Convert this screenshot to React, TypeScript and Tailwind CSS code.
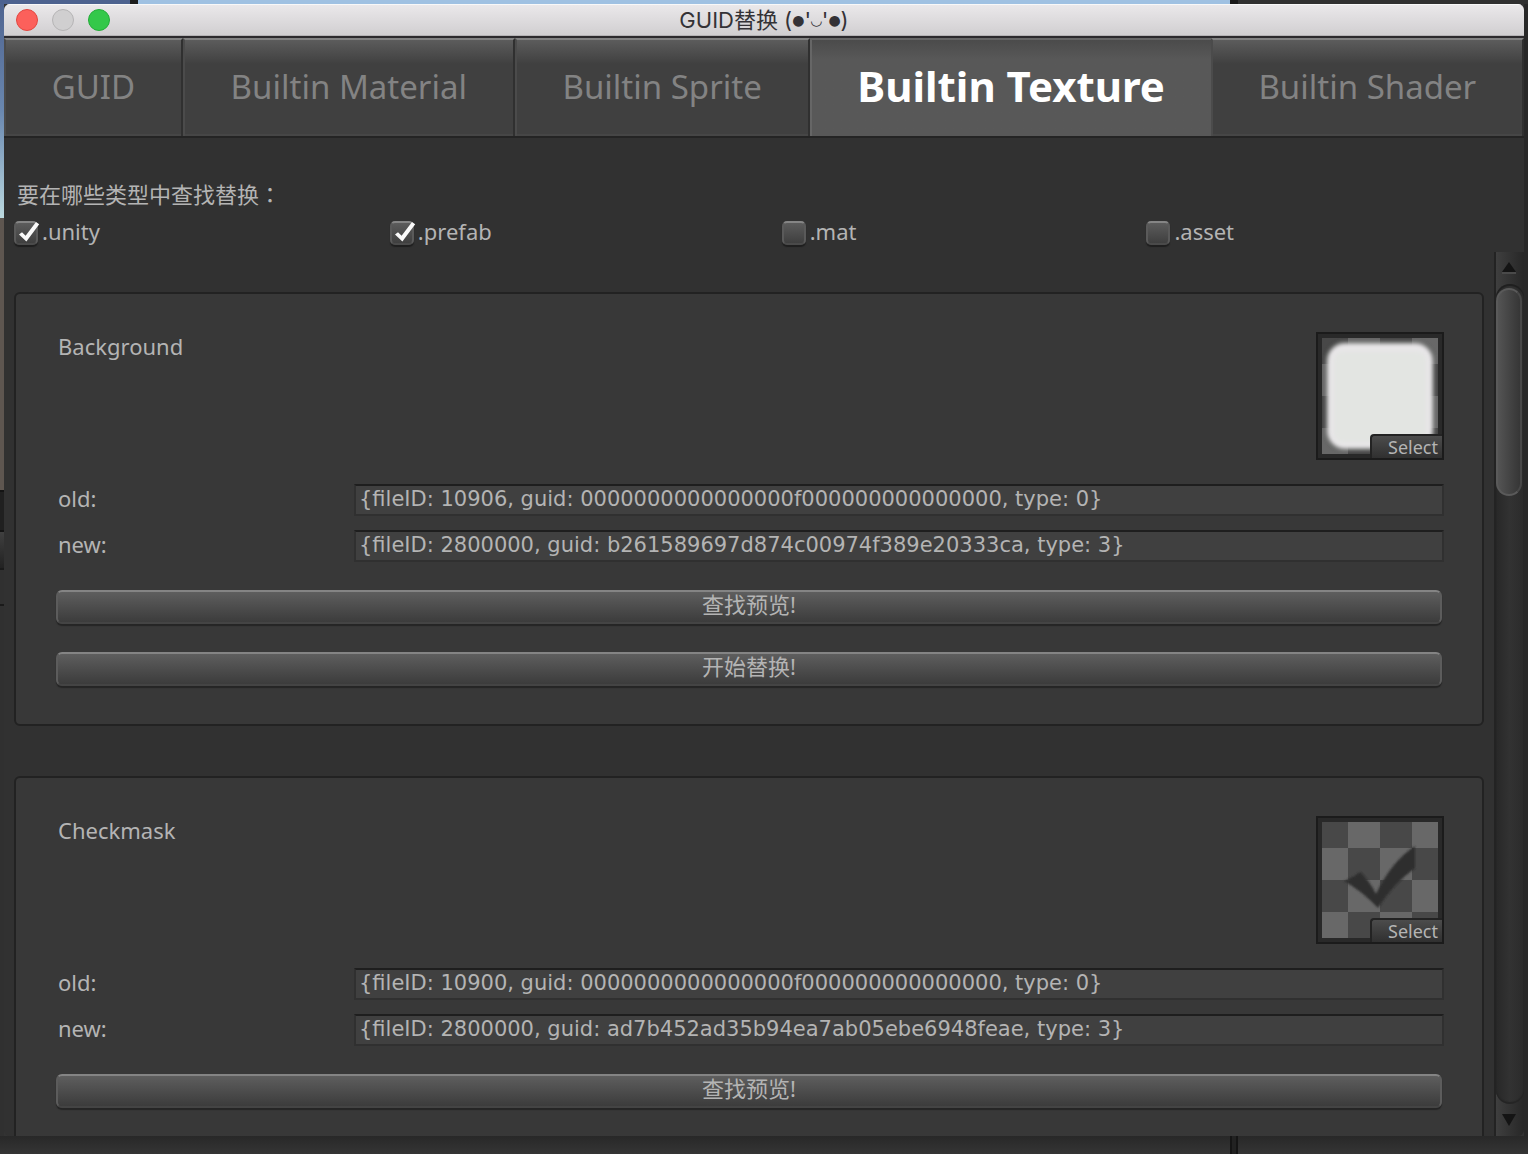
import { useId, useState } from "react";

const TABS = ["GUID", "Builtin Material", "Builtin Sprite", "Builtin Texture", "Builtin Shader"];

const TYPES = [
  { name: ".unity", on: true },
  { name: ".prefab", on: true },
  { name: ".mat", on: false },
  { name: ".asset", on: false },
];

type Entry = { name: string; oldRef: string; newRef: string; art: "panel" | "check" };

const ENTRIES: Entry[] = [
  {
    name: "Background",
    oldRef: "{fileID: 10906, guid: 0000000000000000f000000000000000, type: 0}",
    newRef: "{fileID: 2800000, guid: b261589697d874c00974f389e20333ca, type: 3}",
    art: "panel",
  },
  {
    name: "Checkmask",
    oldRef: "{fileID: 10900, guid: 0000000000000000f000000000000000, type: 0}",
    newRef: "{fileID: 2800000, guid: ad7b452ad35b94ea7ab05ebe6948feae, type: 3}",
    art: "check",
  },
];

function TitleBar() {
  return (
    <header className="grid h-[34px] shrink-0 grid-cols-[1fr_auto_1fr] items-center border-b-2 border-[#2c2a2d] bg-linear-to-b from-[#ebe9eb] to-[#d0ced0] px-3 shadow-[inset_0_1px_0_#f8f8f8,inset_0_-1px_0_#b5b3b5]">
      <div className="flex gap-[14px]">
        <button aria-label="Close" className="size-[22px] rounded-full border border-[#e2463f] bg-[#fc605b]" />
        <button aria-label="Minimize" className="size-[22px] rounded-full border border-[#b5b4b5] bg-[#d0cfd0]" />
        <button aria-label="Zoom" className="size-[22px] rounded-full border border-[#23ac38] bg-[#34c84a]" />
      </div>
      <h1 className="flex items-center font-[Inter,'Noto_Sans_CJK_SC',sans-serif] text-[22px] leading-8 whitespace-pre text-[#343236]">
        GUID替换 (<span className="font-['DejaVu_Sans',sans-serif] text-sm">●</span>'
        <span className="font-['DejaVu_Sans',sans-serif] text-sm font-bold">◡</span>'
        <span className="font-['DejaVu_Sans',sans-serif] text-sm">●</span>)
      </h1>
    </header>
  );
}

function Tabs() {
  const [active, setActive] = useState(3);
  return (
    <nav role="tablist" className="flex h-[100px] shrink-0 border-b-2 border-[#242424]">
      {TABS.map((tab, i) => (
        <button
          key={tab}
          role="tab"
          aria-selected={i === active}
          onClick={() => setActive(i)}
          className={
            i === active
              ? "flex-auto border-t-2 border-l-2 border-[#666] bg-linear-to-b from-[#4b4b4b] to-[#585858] to-20% px-11 pb-1 text-[42px] leading-none font-bold whitespace-nowrap text-white"
              : "flex-auto border-t-2 border-r-2 border-l-2 border-t-[#828282] border-r-[#303030] border-l-[#4b4b4b] bg-linear-to-b from-[#5c5c5c] to-[#404040] to-25% px-11 pb-1 text-[33px] leading-none whitespace-nowrap text-[#838383] shadow-[inset_0_-2px_0_#464646]"
          }
        >
          {tab}
        </button>
      ))}
    </nav>
  );
}

function TypeToggle({ name, initial }: { name: string; initial: boolean }) {
  const [on, setOn] = useState(initial);
  return (
    <label className="flex flex-auto items-center gap-1">
      <span className="relative mt-1 size-6 shrink-0">
        <input
          type="checkbox"
          checked={on}
          onChange={() => setOn(!on)}
          className="block size-6 appearance-none rounded-[5px] border-2 border-[#5a5a5a] border-t-[#858585] border-b-[#4a4a4a] bg-linear-to-b from-[#5c5c5c] to-[#3f3f3f] shadow-[0_2px_1px_#1f1f1f]"
        />
        {on && (
          <svg viewBox="0 0 26 24" className="pointer-events-none absolute top-0 left-0 h-6 w-[26px]" aria-hidden="true">
            <path d="M5 13.5 L8 11.3 L11.6 14.8 L22 1 L25.2 3.2 L12.4 20.6 Z" fill="#fafafa" />
          </svg>
        )}
      </span>
      {name}
    </label>
  );
}

function Checker() {
  return (
    <>
      <rect width="116" height="116" fill="#484848" />
      <path
        d="M26 0h32v26h-32z M90 0h26v26h-26z M0 26h26v32h-26z M58 26h32v32h-32z M26 58h32v32h-32z M90 58h26v32h-26z M0 90h26v26h-26z M58 90h32v26h-32z"
        fill="#686868"
      />
    </>
  );
}

function Thumbnail({ art }: { art: Entry["art"] }) {
  const id = useId();
  return (
    <div className="relative size-32 border-2 border-[#1b1b1b] bg-[#292929] p-1">
      <svg viewBox="0 0 116 116" className="size-full" aria-hidden="true">
        <defs>
          <filter id={id}>
            <feGaussianBlur stdDeviation={art === "panel" ? 2 : 1} />
          </filter>
        </defs>
        <Checker />
        {art === "panel" ? (
          <>
            <rect x="4" y="4" width="108" height="108" rx="18" fill="#303830" opacity="0.4" filter={`url(#${id})`} />
            <rect x="5" y="5" width="106" height="106" rx="18" fill="#e8e6e8" filter={`url(#${id})`} />
            <rect x="12" y="14" width="92" height="90" rx="8" fill="#e3e5e2" filter={`url(#${id})`} />
          </>
        ) : (
          <path
            d="M22 59 Q32 55 38 50 Q47 58 54 72 Q69 40 93 24 L93 46 Q72 61 56 86 Q40 69 22 59 Z"
            fill="#2f2f2f"
            filter={`url(#${id})`}
          />
        )}
      </svg>
      <button className="absolute right-0 bottom-0 h-6 w-[72px] rounded-tl-sm border-t-2 border-l-2 border-[#232323] bg-linear-to-b from-[#4c4c4c] to-[#303030] pr-1 text-right text-lg leading-none text-[#b4b4b4]">
        Select
      </button>
    </div>
  );
}

function RefField({ label, value }: { label: string; value: string }) {
  const id = useId();
  return (
    <div className="flex h-8 items-center">
      <label htmlFor={id} className="w-[300px] shrink-0 pb-1 pl-1">
        {label}
      </label>
      <input
        id={id}
        defaultValue={value}
        className="h-8 min-w-0 flex-1 border-2 border-[#303030] border-t-[#1e1e1e] bg-[#404040] px-[3px] pb-[2px] font-['DejaVu_Sans',sans-serif] text-[21px] leading-none text-[#b4b4b4] outline-none"
      />
    </div>
  );
}

function ActionButton({ children }: { children: string }) {
  return (
    <button className="mx-[2px] mb-[2px] h-[34px] rounded-md border-2 border-[#5c5c5c] border-t-[#848484] border-b-[#444] bg-linear-to-b from-[#5e5e5e] to-[#3c3c3c] pb-[6px] leading-none shadow-[0_2px_1px_#252525]">
      {children}
    </button>
  );
}

function EntryCard({ entry }: { entry: Entry }) {
  return (
    <section className="flex shrink-0 flex-col rounded-md border-2 border-[#222] bg-[#383838] px-[38px] pt-[38px] pb-9">
      <div className="flex justify-between">
        <h2 className="pl-1 leading-7">{entry.name}</h2>
        <Thumbnail art={entry.art} />
      </div>
      <div className="mt-6 flex flex-col gap-[14px]">
        <RefField label="old:" value={entry.oldRef} />
        <RefField label="new:" value={entry.newRef} />
      </div>
      <div className="mt-7 flex flex-col gap-[26px]">
        <ActionButton>查找预览!</ActionButton>
        <ActionButton>开始替换!</ActionButton>
      </div>
    </section>
  );
}

function Scrollbar() {
  return (
    <div className="flex w-[30px] shrink-0 flex-col border-l-2 border-[#232323] bg-linear-to-r from-[#3f3f3f] to-[#272727]">
      <button aria-label="Scroll up" className="flex h-8 shrink-0 items-center justify-center pr-[2px]">
        <svg viewBox="0 0 14 12" className="h-3 w-[14px]" aria-hidden="true">
          <path d="M0 10h14v2H0z" fill="#4a4a4a" />
          <path d="M7 0 L14 10 H0 Z" fill="#141414" />
        </svg>
      </button>
      <div className="flex-1 rounded-[14px] bg-linear-to-r from-[#282828] via-[#323232] to-[#2b2b2b] pt-1 shadow-[inset_0_2px_1px_#1f1f1f,inset_0_-2px_1px_#252525]">
        <div className="h-[208px] w-[26px] rounded-[13px] border-2 border-[#5a5a5a] border-r-[#484848] bg-linear-to-r from-[#545454] to-[#363636]" />
      </div>
      <button aria-label="Scroll down" className="flex h-8 shrink-0 items-center justify-center pr-[2px]">
        <svg viewBox="0 0 14 12" className="h-3 w-[14px]" aria-hidden="true">
          <path d="M0 0 H14 L7 12 Z" fill="#141414" />
        </svg>
      </button>
    </div>
  );
}

function DesktopEdges() {
  return (
    <div className="flex w-1 shrink-0 flex-col">
      <div className="h-[214px] bg-linear-to-b from-[#4f6490] via-[#6a88b0] to-[#bcd9df]" />
      <div className="h-[272px] bg-[#5e5650]" />
      <div className="h-[42px] border-y-2 border-[#141414] bg-[#202020]" />
      <div className="h-[38px] border-b-2 border-[#1a1a1a] bg-linear-to-b from-[#404040] to-[#222]" />
      <div className="h-9 border-b-2 border-[#1a1a1a] bg-[#303030]" />
      <div className="flex-1 bg-[#303030]" />
    </div>
  );
}

export default function App() {
  return (
    <div className="flex h-screen flex-col overflow-hidden bg-[#333] font-['Noto_Sans','Noto_Sans_CJK_SC',sans-serif] text-[22px] text-[#b4b4b4]">
      <div className="flex h-1 shrink-0">
        <div className="w-[130px] bg-[#4d628f]" />
        <div className="w-2 bg-[#1d1d1d]" />
        <div className="flex-1 bg-[#9fc1e2]" />
        <div className="w-2 bg-[#1a1a1a]" />
        <div className="w-[290px] bg-[#303030]" />
      </div>
      <div className="flex min-h-0 flex-1">
        <DesktopEdges />
        <main className="flex min-w-0 flex-1 flex-col overflow-hidden rounded-md bg-[#313131]">
          <TitleBar />
          <Tabs />
          <fieldset className="shrink-0 pt-[38px] pl-[10px]">
            <legend className="float-left h-[34px] w-full pl-[3px] leading-[34px]">
              要在哪些类型中查找替换<span className="font-['Noto_Sans_CJK_TC',sans-serif]">：</span>
            </legend>
            <div className="clear-both flex h-[42px] items-center">
              {TYPES.map((t) => (
                <TypeToggle key={t.name} name={t.name} initial={t.on} />
              ))}
            </div>
          </fieldset>
          <div className="flex min-h-0 flex-1">
            <div className="flex min-w-0 flex-1 flex-col gap-[50px] overflow-y-auto px-[10px] pt-10 [scrollbar-width:none]">
              {ENTRIES.map((e) => (
                <EntryCard key={e.name} entry={e} />
              ))}
            </div>
            <Scrollbar />
          </div>
        </main>
        <div className="w-1 shrink-0 bg-[#282828]" />
      </div>
      <div className="flex h-[18px] shrink-0 bg-linear-to-b from-[#282828] to-[#353535]">
        <div className="flex-1" />
        <div className="w-2 border-x-2 border-[#151515] bg-[#222]" />
        <div className="w-[290px]" />
      </div>
    </div>
  );
}
